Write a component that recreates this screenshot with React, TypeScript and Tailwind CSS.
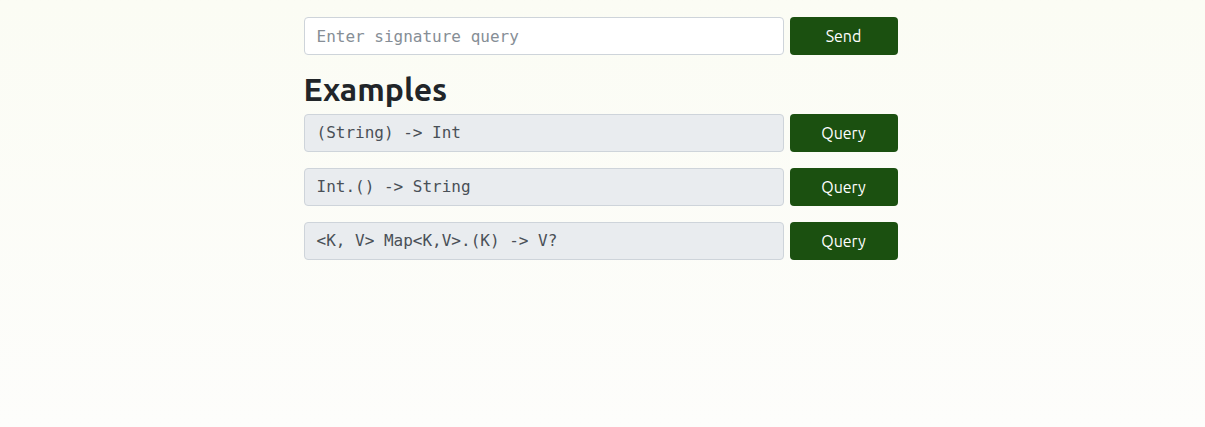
const examples = ["(String) -> Int", "Int.() -> String", "<K, V> Map<K,V>.(K) -> V?"];

const mono = "font-['DejaVu_Sans_Mono',monospace]";
const sans = "font-['Ubuntu','Noto_Sans',sans-serif]";

export default function App() {
  return (
    <div className="min-h-[427px] bg-gradient-to-b from-[#fbfcf4] to-[#fdfdfb]">
      <div className="mx-auto w-[598px] pr-[4px] pt-[17px]">
        <div className="flex gap-[6px]">
          <input
            className={`h-[38px] w-[480px] rounded border border-[#ced4da] bg-white px-3 text-base text-[#495057] outline-none placeholder:text-[#868e96] ${mono}`}
            placeholder="Enter signature query"
          />
          <button className={`h-[38px] w-[108px] rounded bg-[#1b5010] text-base text-white ${sans}`}>
            Send
          </button>
        </div>

        <h2 className={`mt-[15px] text-[32px] font-bold leading-[38px] text-[#212529] ${sans}`}>
          Examples
        </h2>

        <div className="mt-[6px] flex flex-col gap-4">
          {examples.map((ex) => (
            <div key={ex} className="flex gap-[6px]">
              <div
                className={`flex h-[38px] w-[480px] items-center rounded border border-[#ced4da] bg-[#e9ecef] px-3 text-base text-[#495057] ${mono}`}
              >
                {ex}
              </div>
              <button className={`h-[38px] w-[108px] rounded bg-[#1b5010] text-base text-white ${sans}`}>
                Query
              </button>
            </div>
          ))}
        </div>
      </div>
    </div>
  );
}
